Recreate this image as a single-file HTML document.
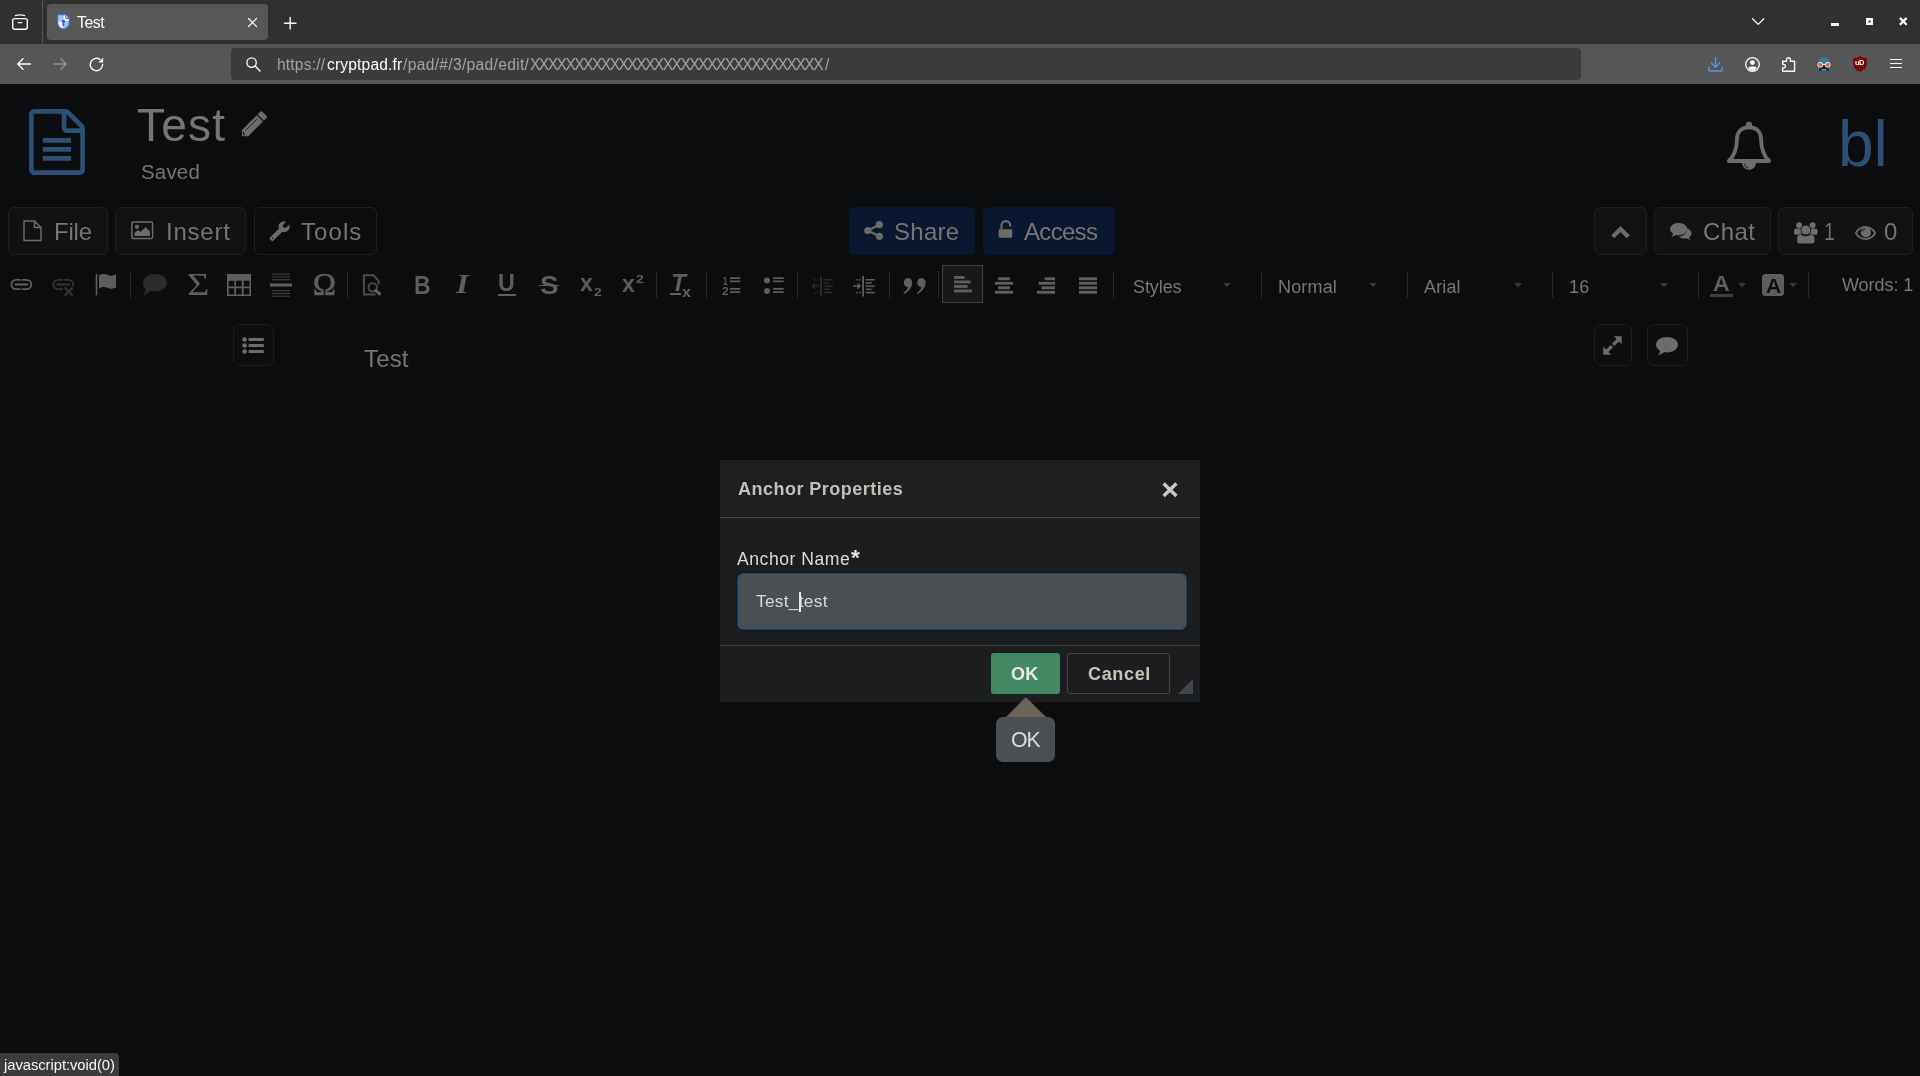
<!DOCTYPE html>
<html lang="en"><head><meta charset="utf-8"><title>Test</title>
<style>
*{margin:0;padding:0;box-sizing:border-box}
html,body{width:1920px;height:1076px;overflow:hidden;background:#0c0d0f}
body{position:relative;font-family:"Liberation Sans",sans-serif;}
.a{position:absolute;display:block}
.t{position:absolute;white-space:nowrap;line-height:1;display:block;will-change:transform}
svg{position:absolute;display:block;overflow:visible}
.btn{position:absolute;background:#111214;border:1px solid #1f2022;border-radius:6px}
.sep{position:absolute;width:1px;top:271px;height:27px;background:#2b2b2b}
.ck{fill:#5e5e5e}
.g{color:#7b7773}
</style></head>
<body>
<!-- browser chrome -->
<div class="a" style="left:0px;top:0px;width:1920px;height:44px;background:#303030"></div>
<div class="a" style="left:42px;top:0px;width:1px;height:44px;background:#555"></div>
<div class="a" style="left:47px;top:4px;width:221px;height:36px;background:#575757;border-radius:4px"></div>
<div class="a" style="left:0px;top:44px;width:1920px;height:40px;background:#565656"></div>
<div class="a" style="left:231px;top:48px;width:1350px;height:32px;background:#3c3c3c;border-radius:4px"></div>
<svg style="left:12px;top:14px;" width="16" height="16" viewBox="0 0 16 16"><path d="M3.300 1.600Q8 0.300 12.700 1.600" fill="none" stroke="#fbfbfe" stroke-width="1.200" stroke-linecap="round"/><rect x="0.7" y="4.6" width="14.6" height="10.7" rx="2" fill="none" stroke="#fbfbfe" stroke-width="1.4"/><path d="M6.2 8.6h3.6" stroke="#fbfbfe" stroke-width="1.4" stroke-linecap="round"/></svg>
<svg style="left:56.5px;top:14.1px;" width="13" height="16" viewBox="0 0 13 16"><path d="M0.600 0.600H6.400V7.300H0.600Z" fill="#a8c2ee"/><path d="M6.400 7.300H12.300V9C12.300 12.500 9.500 14.300 6.400 15.300Z" fill="#a8c2ee"/><path d="M6.400 0.600H9L12.300 4.300V7.300H6.400Z" fill="#f6f8fd"/><path d="M0.600 7.300H6.400V15.300C3.300 14.300 0.600 12.500 0.600 9Z" fill="#f6f8fd"/><path d="M0.600 0.600H9L12.300 4.300V9C12.300 12.500 9.500 14.300 6.400 15.300C3.300 14.300 0.600 12.500 0.600 9Z" fill="none" stroke="#3b6fd6" stroke-width="1.200" stroke-linejoin="round"/><path d="M8.800 0.800V4.500H12.100" fill="none" stroke="#3b6fd6" stroke-width="1"/><circle cx="6.400" cy="7.300" r="1.600" fill="#255bcf"/><path d="M5.700 8H7.100L7.400 11.700H5.400Z" fill="#255bcf"/></svg>
<span class="t" style="left:76.65px;top:14.83px;font-size:15.8px;color:#fbfbfe;letter-spacing:-0.406px;font-family:'Liberation Sans',sans-serif;">Test</span>
<svg style="left:247.5px;top:17.5px;" width="9" height="9" viewBox="0 0 9 9"><path d="M0.5 0.5L8.5 8.5M8.5 0.5L0.5 8.5" stroke="#fbfbfe" stroke-width="1.2" stroke-linecap="round"/></svg>
<svg style="left:283.5px;top:16.5px;" width="12.4" height="12.4" viewBox="0 0 12.4 12.4"><path d="M6.2 0.4V12M0.4 6.2H12" stroke="#fbfbfe" stroke-width="1.4" stroke-linecap="round"/></svg>
<svg style="left:1752px;top:18px;" width="12.4" height="7.5" viewBox="0 0 12.4 7.5"><path d="M0.6 0.8L6.2 6.4L11.8 0.8" fill="none" stroke="#fbfbfe" stroke-width="1.3" stroke-linecap="round" stroke-linejoin="round"/></svg>
<div class="a" style="left:1831px;top:23px;width:8px;height:3px;background:#fbfbfe"></div>
<svg style="left:1865.5px;top:18px;" width="7" height="7" viewBox="0 0 7 7"><path d="M0 0H7V7H0Z M2.6 2.6V4.6H4.6V2.6Z" fill="#fbfbfe" fill-rule="evenodd"/></svg>
<svg style="left:1898.5px;top:17.3px;" width="8.6" height="8.7" viewBox="0 0 8.6 8.7"><path d="M0.9 0.9L7.7 7.8M7.7 0.9L0.9 7.8" stroke="#fbfbfe" stroke-width="2.3" stroke-linecap="butt"/></svg>
<svg style="left:17px;top:58px;" width="14" height="12" viewBox="0 0 14 12"><path d="M6 0.7L0.8 6L6 11.3M1 6H13.5" fill="none" stroke="#fbfbfe" stroke-width="1.4" stroke-linecap="round" stroke-linejoin="round"/></svg>
<svg style="left:53px;top:58px;" width="14" height="12" viewBox="0 0 14 12"><path d="M8 0.7L13.2 6L8 11.3M13 6H0.5" fill="none" stroke="#909090" stroke-width="1.4" stroke-linecap="round" stroke-linejoin="round"/></svg>
<svg style="left:88.5px;top:56.5px;" width="15" height="15" viewBox="0 0 15 15"><path d="M13.6 7.5A6.2 6.2 0 1 1 10.9 2.4" fill="none" stroke="#fbfbfe" stroke-width="1.4" stroke-linecap="round"/><path d="M14.2 0.6V5.4H9.4Z" fill="#fbfbfe"/></svg>
<svg style="left:245.5px;top:56.5px;" width="15" height="15" viewBox="0 0 15 15"><circle cx="5.6" cy="5.6" r="4.7" fill="none" stroke="#fbfbfe" stroke-width="1.3"/><path d="M9.1 9.1L14 14" stroke="#fbfbfe" stroke-width="1.4" stroke-linecap="round"/></svg>
<span class="t" style="left:276.52px;top:56.59px;font-size:15.6px;color:#a2a2a5;letter-spacing:0.178px;font-family:'Liberation Sans',sans-serif;">https://</span>
<span class="t" style="left:326.94px;top:56.59px;font-size:15.6px;color:#fbfbfe;letter-spacing:0.161px;font-family:'Liberation Sans',sans-serif;">cryptpad.fr</span>
<span class="t" style="left:403.00px;top:56.59px;font-size:15.6px;color:#a2a2a5;letter-spacing:0.319px;font-family:'Liberation Sans',sans-serif;">/pad/#/3/pad/edit/</span>
<span class="t" style="left:530.16px;top:56.59px;font-size:15.6px;color:#a2a2a5;letter-spacing:-1.553px;font-family:'Liberation Sans',sans-serif;">XXXXXXXXXXXXXXXXXXXXXXXXXXXXXXXXX</span>
<span class="t" style="left:824.50px;top:56.59px;font-size:15.6px;color:#a2a2a5;letter-spacing:0.000px;font-family:'Liberation Sans',sans-serif;">/</span>
<svg style="left:1708px;top:56.5px;" width="15" height="15" viewBox="0 0 15 15"><path d="M7.5 0.7V10M3.3 6L7.5 10.2L11.7 6" fill="none" stroke="#4d96ec" stroke-width="1.4" stroke-linecap="round" stroke-linejoin="round"/><path d="M0.7 10.5V12.2A1.8 1.8 0 0 0 2.5 14H12.5A1.8 1.8 0 0 0 14.3 12.2V10.5" fill="none" stroke="#4d96ec" stroke-width="1.4" stroke-linecap="round"/></svg>
<svg style="left:1745px;top:57px;" width="15" height="15" viewBox="0 0 15 15"><circle cx="7.5" cy="7.5" r="6.8" fill="none" stroke="#fbfbfe" stroke-width="1.3"/><circle cx="7.5" cy="5.6" r="2.4" fill="#fbfbfe"/><path d="M3.200 10.600C4.500 9.200 10.500 9.200 11.800 10.600C11 12.700 9.300 13.700 7.500 13.700S4 12.700 3.200 10.600Z" fill="#fbfbfe"/></svg>
<svg style="left:1781.5px;top:56px;" width="14" height="16" viewBox="0 0 14 16"><path d="M0.7 5.2H4.6V3.6A1.9 1.9 0 0 1 8.4 3.6V5.2H12.6V15.3H0.7V11.9H1.8A1.7 1.7 0 0 0 1.8 8.5H0.7Z" fill="none" stroke="#fbfbfe" stroke-width="1.4" stroke-linejoin="round"/></svg>
<svg style="left:1816px;top:57px;" width="16" height="14" viewBox="0 0 16 14"><path d="M2 9C1 3.5 4.5 0.2 8 0.2S15 3.5 14 9V14H2Z" fill="#2e7f98"/><path d="M3 8H13V14H3Z" fill="#1d2a33"/><path d="M5.5 12H10.500V13.6H5.500Z" fill="#4fa1b8"/><circle cx="4.300" cy="7.8" r="2.500" fill="#e8613a" stroke="#f1e6e0" stroke-width="1"/><circle cx="11.700" cy="7.8" r="2.500" fill="#e8613a" stroke="#f1e6e0" stroke-width="1"/><path d="M6.800 7.500H9.200" stroke="#f1e6e0" stroke-width="1"/></svg>
<svg style="left:1853px;top:56px;" width="14" height="16" viewBox="0 0 14 16"><path d="M7 0.2C5 1.600 2.500 2 0.3 2V7.500C0.300 11.800 3.500 14.500 7 15.800C10.500 14.500 13.700 11.800 13.700 7.500V2C11.500 2 9 1.600 7 0.200Z" fill="#800000"/></svg>
<span class="t" style="left:1855.2px;top:59px;font-size:7.5px;font-weight:bold;color:#fff;letter-spacing:-0.6px">uD</span>
<div class="a" style="left:1890px;top:58.7px;width:12px;height:1.3px;background:#fbfbfe;border-radius:1px"></div>
<div class="a" style="left:1890px;top:63.1px;width:12px;height:1.3px;background:#fbfbfe;border-radius:1px"></div>
<div class="a" style="left:1890px;top:67.1px;width:12px;height:1.3px;background:#fbfbfe;border-radius:1px"></div>
<div class="a" style="left:0px;top:1052.5px;width:119px;height:24px;background:#3b3b3b;border-top-right-radius:4px"></div>
<span class="t" style="left:4.27px;top:1057.77px;font-size:14.8px;color:#f4f4f6;letter-spacing:-0.054px;font-family:'Liberation Sans',sans-serif;">javascript:void(0)</span>
<!-- cryptpad toolbar -->
<svg style="left:29px;top:109px;" width="56" height="66" viewBox="0 0 56 66"><path d="M2.400 5.400A3 3 0 0 1 5.400 2.400H36.600Q38 2.400 39 3.400L52.600 17Q53.600 18 53.600 19.400V60.600A3 3 0 0 1 50.600 63.600H5.400A3 3 0 0 1 2.400 60.600Z" fill="none" stroke="#2c5075" stroke-width="4.700" stroke-linejoin="round"/><path d="M35.100 3V18.600A3 3 0 0 0 38.100 21.600H53" fill="none" stroke="#2c5075" stroke-width="4.700"/><path d="M13.800 31.400H42.100M13.800 40.400H42.100M13.800 49.400H42.100" stroke="#2c5075" stroke-width="4.600"/></svg>
<span class="t" style="left:136.59px;top:102.06px;font-size:46px;color:#787471;letter-spacing:1.190px;font-family:'Liberation Sans',sans-serif;">Test</span>
<svg style="left:0px;top:0px;" width="1" height="1" viewBox="0 0 1 1"><g transform="translate(242 136.300) rotate(45) translate(0 -31.750)"><path d="M-4.450 5.200V1.600A1.600 1.600 0 0 1 -2.850 0H2.850A1.600 1.600 0 0 1 4.450 1.600V5.200Z" fill="#6e6c69"/><path d="M-4.450 6.500H4.450V27.300L0 31.750L-4.450 27.300Z" fill="#6e6c69"/><path d="M-1.700 8.500V25.500" stroke="#0c0d0f" stroke-width="0.700"/><path d="M-2.300 27.700L0 29.300L1.200 28.300" fill="none" stroke="#0c0d0f" stroke-width="0.900"/></g></svg>
<span class="t" style="left:140.78px;top:161.55px;font-size:20.5px;color:#787471;letter-spacing:0.179px;font-family:'Liberation Sans',sans-serif;">Saved</span>
<div class="btn" style="left:8px;top:207px;width:100px;height:48px;"></div>
<div class="btn" style="left:115px;top:207px;width:131px;height:48px;"></div>
<div class="btn" style="left:254px;top:207px;width:123px;height:48px;background:#0c0d0f"></div>
<svg style="left:23px;top:220px;" width="19" height="21.5" viewBox="0 0 19 21.5"><path d="M1 1H11.500L18 7.500V20.500H1Z" fill="none" stroke="#6e6c69" stroke-width="1.500" stroke-linejoin="round"/><path d="M11.500 1V7.500H18" fill="none" stroke="#6e6c69" stroke-width="1.500" stroke-linejoin="round"/></svg>
<span class="t" style="left:54.03px;top:219.68px;font-size:24px;color:#787471;letter-spacing:-0.213px;font-family:'Liberation Sans',sans-serif;">File</span>
<svg style="left:131px;top:221px;" width="22.5" height="18.5" viewBox="0 0 22.5 18.5"><rect x="0.900" y="0.900" width="20.700" height="16.700" rx="1.500" fill="none" stroke="#6e6c69" stroke-width="1.500"/><circle cx="6" cy="5.800" r="2.100" fill="#6e6c69"/><path d="M3.500 15V12L7 8.800L9.500 11L14.500 6L19 10.500V15Z" fill="#6e6c69"/></svg>
<span class="t" style="left:165.79px;top:219.68px;font-size:24px;color:#787471;letter-spacing:0.770px;font-family:'Liberation Sans',sans-serif;">Insert</span>
<svg style="left:0px;top:0px;" width="1" height="1" viewBox="0 0 1 1"><g transform="translate(284.100 226.700) rotate(45)"><circle cx="0" cy="0" r="5.500" fill="#6e6c69"/><path d="M-2.300 2H2.300V17.700A1.200 1.200 0 0 1 1.100 18.900H-1.100A1.200 1.200 0 0 1 -2.300 17.700Z" fill="#6e6c69"/><path d="M-2.100 -7V-1.300A2.100 2.100 0 0 0 2.100 -1.300V-7Z" fill="#0c0d0f"/><circle cx="0" cy="16.400" r="0.700" fill="#0c0d0f"/></g></svg>
<span class="t" style="left:300.77px;top:219.68px;font-size:24px;color:#787471;letter-spacing:1.069px;font-family:'Liberation Sans',sans-serif;">Tools</span>
<div class="a" style="left:849px;top:207px;width:126px;height:48px;background:#0a1731;border-radius:6px"></div>
<div class="a" style="left:983px;top:207px;width:132px;height:48px;background:#0a1731;border-radius:6px"></div>
<svg style="left:864px;top:221px;" width="19" height="19" viewBox="0 0 19 19"><circle cx="15.300" cy="3.700" r="3.600" fill="#6e6c69"/><circle cx="3.800" cy="9.500" r="3.600" fill="#6e6c69"/><circle cx="15.300" cy="15.300" r="3.600" fill="#6e6c69"/><path d="M15.300 3.700L3.800 9.500L15.300 15.300" fill="none" stroke="#6e6c69" stroke-width="2.200"/></svg>
<span class="t" style="left:894.42px;top:219.68px;font-size:24px;color:#787471;letter-spacing:0.276px;font-family:'Liberation Sans',sans-serif;">Share</span>
<svg style="left:999px;top:220px;" width="13.5" height="18" viewBox="0 0 13.5 18"><rect x="-0.400" y="9.300" width="13.600" height="8.500" rx="1.200" fill="#6e6c69"/><path d="M2.500 9.600V5.500A4.350 4.350 0 0 1 11.200 5.500V6.400" fill="none" stroke="#6e6c69" stroke-width="2.200"/></svg>
<span class="t" style="left:1024.45px;top:219.68px;font-size:24px;color:#787471;letter-spacing:-0.688px;font-family:'Liberation Sans',sans-serif;">Access</span>
<div class="btn" style="left:1594px;top:207px;width:53px;height:48px;"></div>
<div class="btn" style="left:1654px;top:207px;width:117px;height:48px;"></div>
<div class="btn" style="left:1778px;top:207px;width:135px;height:48px;"></div>
<svg style="left:1611px;top:225.5px;" width="19" height="12.5" viewBox="0 0 19 12.5"><path d="M1.800 10.800L9.500 3L17.200 10.800" fill="none" stroke="#6e6c69" stroke-width="4.300"/></svg>
<svg style="left:1670px;top:222.5px;" width="21.5" height="17" viewBox="0 0 21.5 17"><path d="M8.600 0C13.400 0 17.200 2.700 17.200 6.100S13.400 12.200 8.600 12.200C7.700 12.200 6.800 12.100 6 11.900C4.800 12.800 3.200 13.400 1.400 13.500C2.300 12.800 3 11.800 3.200 10.700C1.200 9.600 0 7.900 0 6.100C0 2.700 3.800 0 8.600 0Z" stroke="#111214" stroke-width="1.200" paint-order="stroke" fill="#6e6c69"/><path d="M17 5.200C19.700 6.100 21.500 8 21.500 10.200C21.500 11.800 20.500 13.200 19 14.200C19.200 15.100 19.700 16 20.400 16.700C18.900 16.600 17.600 16 16.600 15.200C15.900 15.400 15.200 15.500 14.500 15.500C12.300 15.500 10.300 14.700 9 13.400C13.500 13.100 17.100 9.900 17.100 6C17.100 5.700 17.100 5.500 17 5.200Z" fill="#6e6c69"/></svg>
<span class="t" style="left:1703.30px;top:219.68px;font-size:24px;color:#787471;letter-spacing:0.393px;font-family:'Liberation Sans',sans-serif;">Chat</span>
<svg style="left:1794px;top:221.5px;" width="23" height="21.5" viewBox="0 0 23 21.5"><circle cx="5.100" cy="3.300" r="3" fill="#6e6c69"/><circle cx="18.600" cy="3.300" r="3" fill="#6e6c69"/><rect x="0" y="6.600" width="8" height="6.200" rx="2.600" fill="#6e6c69"/><rect x="15.700" y="6.600" width="8" height="6.200" rx="2.600" fill="#6e6c69"/><circle cx="11.850" cy="8" r="4.600" fill="#6e6c69" stroke="#111214" stroke-width="1.300" paint-order="stroke"/><path d="M3.200 19.200V16.500C3.200 13.800 4.800 12.600 6.600 12.200C8 13.500 9.800 14.200 11.850 14.200S15.700 13.500 17.100 12.200C18.900 12.600 20.500 13.800 20.500 16.500V19.200A2.200 2.200 0 0 1 18.300 21.400H5.400A2.200 2.200 0 0 1 3.200 19.200Z" fill="#6e6c69" stroke="#111214" stroke-width="1" paint-order="stroke"/></svg>
<span class="t" style="left:1823.72px;top:219.71px;font-size:24.56px;color:#787471;font-family:'Liberation Sans',sans-serif;transform-origin:0 0;transform:scaleX(0.792);">1</span>
<svg style="left:1855px;top:226px;" width="21" height="14" viewBox="0 0 21 14"><path d="M0.800 7C3 3.200 6.500 0.900 10.500 0.900S18 3.200 20.200 7C18 10.800 14.500 13.100 10.500 13.100S3 10.800 0.800 7Z" fill="none" stroke="#6e6c69" stroke-width="1.700"/><circle cx="10.900" cy="6.400" r="5.100" fill="#6e6c69"/><path d="M10.300 2.800A3 3 0 0 0 7.300 5.800" fill="none" stroke="#111214" stroke-width="0.900"/></svg>
<span class="t" style="left:1883.56px;top:219.68px;font-size:24px;color:#787471;letter-spacing:0.000px;font-family:'Liberation Sans',sans-serif;">0</span>
<svg style="left:1727px;top:122px;" width="44" height="48" viewBox="0 0 44 48"><path d="M1.900 39C6 35 9.900 27 9.900 17.500C9.900 10 14.500 5.250 22 5.250C29.500 5.250 34.100 10 34.100 17.500C34.100 27 38 35 42.100 39Z" fill="none" stroke="#6e6c69" stroke-width="3.900" stroke-linejoin="round"/><circle cx="22" cy="2.800" r="3.100" fill="#6e6c69"/><path d="M15 40.800A7.100 7.100 0 0 0 29.200 40.800Z" fill="#6e6c69"/><path d="M17.300 41.500A5.200 5.200 0 0 0 21.800 46.200" fill="none" stroke="#0c0d0f" stroke-width="0.800"/></svg>
<span class="t" style="left:1838.40px;top:111.82px;font-size:64px;color:#2c5075;letter-spacing:0.028px;font-family:'Liberation Sans',sans-serif;">bl</span>
<div class="btn" style="left:233px;top:324px;width:41px;height:42px;border-radius:7px;background:#0d0e10;border-color:#1d1e20"></div>
<div class="btn" style="left:1594px;top:324px;width:38px;height:42px;border-radius:7px;background:#0d0e10;border-color:#1d1e20"></div>
<div class="btn" style="left:1647px;top:324px;width:41px;height:42px;border-radius:7px;background:#0d0e10;border-color:#1d1e20"></div>
<svg style="left:0px;top:0px;pointer-events:none" width="1920" height="1076" viewBox="0 0 1920 1076"><circle cx="244.600" cy="339.5" r="2.300" fill="#6e6c69"/><rect x="248.600" y="338.0" width="15.200" height="3" fill="#6e6c69"/><circle cx="244.600" cy="345.5" r="2.300" fill="#6e6c69"/><rect x="248.600" y="344.0" width="15.200" height="3" fill="#6e6c69"/><circle cx="244.600" cy="351.5" r="2.300" fill="#6e6c69"/><rect x="248.600" y="350.0" width="15.200" height="3" fill="#6e6c69"/></svg>
<svg style="left:1603px;top:336px;" width="19" height="19" viewBox="0 0 19 19"><path d="M10.800 0.300H18.700V8.200L15.900 5.400L11.300 10L9 7.700L13.600 3.100Z" fill="#6e6c69"/><path d="M8.200 18.700H0.300V10.800L3.100 13.600L7.700 9L10 11.300L5.400 15.900Z" fill="#6e6c69"/></svg>
<svg style="left:1656px;top:337px;" width="22" height="18.5" viewBox="0 0 22 18.5"><path d="M11 0C17.100 0 22 3.400 22 7.700S17.100 15.400 11 15.400C10 15.400 9 15.300 8.100 15.100C6.500 16.800 4.300 17.900 1.600 18.300C3 17 3.900 15.400 4.100 13.700C1.600 12.300 0 10.100 0 7.700C0 3.400 4.900 0 11 0Z" fill="#6e6c69"/></svg>
<span class="t" style="left:363.97px;top:346.68px;font-size:24px;color:#787471;letter-spacing:0.160px;font-family:'Liberation Sans',sans-serif;">Test</span>
<!-- ckeditor toolbar -->
<div class="a" style="left:130px;top:271px;width:1.3px;height:27px;background:#2a2a2b"></div>
<div class="a" style="left:347px;top:271px;width:1.3px;height:27px;background:#2a2a2b"></div>
<div class="a" style="left:656px;top:271px;width:1.3px;height:27px;background:#2a2a2b"></div>
<div class="a" style="left:706px;top:271px;width:1.3px;height:27px;background:#2a2a2b"></div>
<div class="a" style="left:797px;top:271px;width:1.3px;height:27px;background:#2a2a2b"></div>
<div class="a" style="left:889px;top:271px;width:1.3px;height:27px;background:#2a2a2b"></div>
<div class="a" style="left:938px;top:271px;width:1.3px;height:27px;background:#2a2a2b"></div>
<div class="a" style="left:1113px;top:271px;width:1.3px;height:27px;background:#2a2a2b"></div>
<div class="a" style="left:1261px;top:271px;width:1.3px;height:27px;background:#2a2a2b"></div>
<div class="a" style="left:1407px;top:271px;width:1.3px;height:27px;background:#2a2a2b"></div>
<div class="a" style="left:1552px;top:271px;width:1.3px;height:27px;background:#2a2a2b"></div>
<div class="a" style="left:1698px;top:271px;width:1.3px;height:27px;background:#2a2a2b"></div>
<div class="a" style="left:1808px;top:271px;width:1.3px;height:27px;background:#2a2a2b"></div>
<svg style="left:0px;top:0px;pointer-events:none" width="1920" height="1076" viewBox="0 0 1920 1076"><rect x="11.4" y="279.8" width="19.800" height="9.400" rx="4.700" fill="none" stroke="#5e5e5e" stroke-width="1.800"/><rect x="20.8" y="278.7" width="1" height="2.200" fill="#0c0d0f"/><rect x="20.8" y="288.1" width="1" height="2.200" fill="#0c0d0f"/><rect x="14.8" y="283.5" width="13.200" height="2" fill="#5e5e5e"/></svg>
<svg style="left:0px;top:0px;pointer-events:none" width="1920" height="1076" viewBox="0 0 1920 1076"><rect x="53.4" y="279.8" width="19.800" height="9.400" rx="4.700" fill="none" stroke="#353535" stroke-width="1.800"/><rect x="62.8" y="278.7" width="1" height="2.200" fill="#0c0d0f"/><rect x="62.8" y="288.1" width="1" height="2.200" fill="#0c0d0f"/><rect x="56.8" y="283.5" width="13.200" height="2" fill="#353535"/><rect x="63" y="286" width="12" height="11" fill="#0c0d0f"/><path d="M64.700 287.500L72.700 295.700M72.700 287.500L64.700 295.700" stroke="#353535" stroke-width="2.200"/></svg>
<svg style="left:0px;top:0px;pointer-events:none" width="1920" height="1076" viewBox="0 0 1920 1076"><rect x="95.700" y="274" width="1.600" height="21.500" fill="#5e5e5e"/><path d="M99 275.300C102 273.400 105 273.600 107.500 274.800S113 276.300 116 274.300V287.300C113 289.300 110 289 107.500 287.800S102 286.400 99 288.300Z" fill="#5e5e5e"/></svg>
<svg style="left:0px;top:0px;pointer-events:none" width="1920" height="1076" viewBox="0 0 1920 1076"><path d="M155 274C161.600 274 167 277.800 167 282.700S161.600 291.400 155 291.400C153.300 291.400 151.700 291.200 150.300 290.700C148.800 292.600 146.500 294.300 143.300 295.300C144.800 293.300 145.600 291.300 145.600 289.300C143.900 287.700 143 285.300 143 282.700C143 277.800 148.400 274 155 274Z" fill="#2b2b2b"/></svg>
<span class="t" style="left:186.50px;top:268.15px;font-size:32.06px;color:#5e5e5e;font-family:'Liberation Serif',serif;transform-origin:0 0;transform:scaleX(1.202);">&Sigma;</span>
<span class="t" style="left:312.76px;top:269.89px;font-size:30.82px;color:#5e5e5e;font-family:'Liberation Serif',serif;transform-origin:0 0;transform:scaleX(0.982);-webkit-text-stroke:0.700px #5e5e5e;">&Omega;</span>
<svg style="left:0px;top:0px;pointer-events:none" width="1920" height="1076" viewBox="0 0 1920 1076"><path d="M227 274H251V296H227Z M228.700 280.800V286.600H234.300V280.800Z M236 280.800V286.600H241.800V280.800Z M243.700 280.800V286.600H249.400V280.800Z M228.700 288.300V294.400H234.300V288.300Z M236 288.300V294.400H241.800V288.300Z M243.700 288.300V294.400H249.400V288.300Z" fill="#5e5e5e" fill-rule="evenodd"/></svg>
<svg style="left:0px;top:0px;pointer-events:none" width="1920" height="1076" viewBox="0 0 1920 1076"><rect x="272" y="273.5" width="18" height="1.200" fill="#3c3c3c"/><rect x="272" y="276.3" width="18" height="1.200" fill="#3c3c3c"/><rect x="272" y="279.1" width="18" height="1.200" fill="#3c3c3c"/><rect x="272" y="290" width="18" height="1.200" fill="#3c3c3c"/><rect x="272" y="292.8" width="18" height="1.200" fill="#3c3c3c"/><rect x="272" y="295.6" width="18" height="1.200" fill="#3c3c3c"/><rect x="270" y="283.500" width="22" height="3" fill="#5e5e5e"/></svg>
<svg style="left:0px;top:0px;pointer-events:none" width="1920" height="1076" viewBox="0 0 1920 1076"><path d="M363.900 294.500V275.200H373.300L378.600 280.900V284.500" fill="none" stroke="#4c4c4c" stroke-width="2" stroke-linejoin="round"/><path d="M362.900 294.500H375.500" fill="none" stroke="#4c4c4c" stroke-width="2"/><circle cx="372.700" cy="287.300" r="4.200" fill="#0c0d0f" stroke="#4c4c4c" stroke-width="1.900"/><path d="M376 290.600L379.500 293.900" stroke="#5e5e5e" stroke-width="3.200" stroke-linecap="round"/></svg>
<span class="t" style="left:414.49px;top:271.85px;font-size:26.16px;color:#5e5e5e;font-family:'Liberation Sans',sans-serif;transform-origin:0 0;transform:scaleX(0.876);font-weight:bold;">B</span>
<span class="t" style="left:456.33px;top:270.98px;font-size:27.48px;color:#5e5e5e;font-family:'Liberation Serif',serif;transform-origin:0 0;transform:scaleX(1.190);font-weight:bold;font-style:italic;">I</span>
<span class="t" style="left:498.30px;top:272.30px;font-size:23.35px;color:#5e5e5e;font-family:'Liberation Sans',sans-serif;transform-origin:0 0;transform:scaleX(0.996);font-weight:bold;">U</span>
<div class="a" style="left:498px;top:294.3px;width:17.5px;height:1.7px;background:#5e5e5e"></div>
<span class="t" style="left:539.93px;top:271.94px;font-size:25.99px;color:#5e5e5e;font-family:'Liberation Sans',sans-serif;transform-origin:0 0;transform:scaleX(1.065);font-weight:bold;">S</span>
<div class="a" style="left:539px;top:284.5px;width:20px;height:1.7px;background:#5e5e5e"></div>
<span class="t" style="left:579.86px;top:271.16px;font-size:24.62px;color:#5e5e5e;font-family:'Liberation Sans',sans-serif;transform-origin:0 0;transform:scaleX(0.935);font-weight:bold;">x</span>
<span class="t" style="left:593.83px;top:286.60px;font-size:11.46px;color:#5e5e5e;font-family:'Liberation Sans',sans-serif;transform-origin:0 0;transform:scaleX(1.210);font-weight:bold;">2</span>
<span class="t" style="left:621.86px;top:272.16px;font-size:24.62px;color:#5e5e5e;font-family:'Liberation Sans',sans-serif;transform-origin:0 0;transform:scaleX(0.935);font-weight:bold;">x</span>
<span class="t" style="left:635.83px;top:274.30px;font-size:11.46px;color:#5e5e5e;font-family:'Liberation Sans',sans-serif;transform-origin:0 0;transform:scaleX(1.210);font-weight:bold;">2</span>
<span class="t" style="left:671.28px;top:272.31px;font-size:23.26px;color:#5e5e5e;font-family:'Liberation Sans',sans-serif;transform-origin:0 0;transform:scaleX(1.054);font-weight:bold;font-style:italic;">T</span>
<div class="a" style="left:670px;top:293.3px;width:11px;height:1.6px;background:#5e5e5e"></div>
<span class="t" style="left:682.40px;top:284.17px;font-size:15.15px;color:#5e5e5e;font-family:'Liberation Sans',sans-serif;transform-origin:0 0;transform:scaleX(1.070);font-weight:bold;">x</span>
<span class="t" style="left:723.34px;top:275.16px;font-size:11.63px;color:#5e5e5e;font-family:'Liberation Sans',sans-serif;transform-origin:0 0;transform:scaleX(0.645);font-weight:bold;">1</span>
<span class="t" style="left:721.90px;top:286.30px;font-size:11.46px;color:#5e5e5e;font-family:'Liberation Sans',sans-serif;transform-origin:0 0;transform:scaleX(1.030);font-weight:bold;">2</span>
<svg style="left:0px;top:0px;pointer-events:none" width="1920" height="1076" viewBox="0 0 1920 1076"><rect x="730" y="277.3" width="10.300" height="1.700" fill="#5e5e5e"/><rect x="730" y="280.5" width="10.300" height="1.700" fill="#5e5e5e"/><rect x="730" y="288" width="10.300" height="1.700" fill="#5e5e5e"/><rect x="730" y="291.2" width="10.300" height="1.700" fill="#5e5e5e"/></svg>
<svg style="left:0px;top:0px;pointer-events:none" width="1920" height="1076" viewBox="0 0 1920 1076"><circle cx="767" cy="280.500" r="3" fill="#5e5e5e"/><circle cx="767" cy="291" r="3" fill="#5e5e5e"/><rect x="773" y="277.3" width="10.700" height="1.700" fill="#5e5e5e"/><rect x="773" y="280.5" width="10.700" height="1.700" fill="#5e5e5e"/><rect x="773" y="288" width="10.700" height="1.700" fill="#5e5e5e"/><rect x="773" y="291.2" width="10.700" height="1.700" fill="#5e5e5e"/></svg>
<svg style="left:0px;top:0px;pointer-events:none" width="1920" height="1076" viewBox="0 0 1920 1076"><rect x="820.2" y="276" width="1.800" height="20.500" fill="#2c2c2c"/><rect x="823.7" y="279" width="9" height="1.500" fill="#2c2c2c"/><rect x="823.7" y="282.2" width="6" height="1.500" fill="#2c2c2c"/><rect x="823.7" y="285.4" width="9" height="1.500" fill="#2c2c2c"/><rect x="823.7" y="288.6" width="6" height="1.500" fill="#2c2c2c"/><rect x="823.7" y="291.8" width="9" height="1.500" fill="#2c2c2c"/><rect x="814.2" y="279" width="1.500" height="1.500" fill="#2c2c2c"/><rect x="817" y="279" width="1.500" height="1.500" fill="#2c2c2c"/><rect x="814.2" y="291.8" width="1.500" height="1.500" fill="#2c2c2c"/><rect x="817" y="291.8" width="1.500" height="1.500" fill="#2c2c2c"/><path d="M819 285.400H813" stroke="#2c2c2c" stroke-width="1.500"/><path d="M814.8 282.700L811.3 286.100L814.8 289.500Z" fill="#2c2c2c"/><rect x="862.2" y="276" width="1.800" height="20.500" fill="#5e5e5e"/><rect x="865.7" y="279" width="9" height="1.500" fill="#5e5e5e"/><rect x="865.7" y="282.2" width="6" height="1.500" fill="#5e5e5e"/><rect x="865.7" y="285.4" width="9" height="1.500" fill="#5e5e5e"/><rect x="865.7" y="288.6" width="6" height="1.500" fill="#5e5e5e"/><rect x="865.7" y="291.8" width="9" height="1.500" fill="#5e5e5e"/><rect x="856.2" y="279" width="1.500" height="1.500" fill="#5e5e5e"/><rect x="859" y="279" width="1.500" height="1.500" fill="#5e5e5e"/><rect x="856.2" y="291.8" width="1.500" height="1.500" fill="#5e5e5e"/><rect x="859" y="291.8" width="1.500" height="1.500" fill="#5e5e5e"/><path d="M853 286.100H859" stroke="#5e5e5e" stroke-width="1.500"/><path d="M857.5 282.700L861 286.100L857.5 289.500Z" fill="#5e5e5e"/></svg>
<svg style="left:0px;top:0px;pointer-events:none" width="1920" height="1076" viewBox="0 0 1920 1076"><path d="M907.6 278A4.600 4.600 0 0 1 912.2 282.600C912.2 287.500 909 291.500 904 294L903.3 293C906 291 907.6 289 907.9 287.100A4.600 4.600 0 0 1 907.6 278Z" fill="#5e5e5e"/><path d="M921.1 278A4.600 4.600 0 0 1 925.7 282.600C925.7 287.500 922.5 291.500 917.5 294L916.8 293C919.5 291 921.1 289 921.4 287.100A4.600 4.600 0 0 1 921.1 278Z" fill="#5e5e5e"/></svg>
<div class="a" style="left:942px;top:265px;width:41px;height:38px;background:#17181a;border:1px solid #4b4032"></div>
<svg style="left:0px;top:0px;pointer-events:none" width="1920" height="1076" viewBox="0 0 1920 1076"><rect x="954" y="276.0" width="10.5" height="2.900" fill="#5e5e5e"/><rect x="954" y="280.5" width="16.5" height="2.900" fill="#5e5e5e"/><rect x="954" y="285.0" width="13.5" height="2.900" fill="#5e5e5e"/><rect x="954" y="289.5" width="18" height="2.900" fill="#5e5e5e"/><rect x="998.0" y="277.3" width="12" height="2.900" fill="#5e5e5e"/><rect x="995.0" y="281.8" width="18" height="2.900" fill="#5e5e5e"/><rect x="998.0" y="286.3" width="12" height="2.900" fill="#5e5e5e"/><rect x="995.0" y="290.8" width="18" height="2.900" fill="#5e5e5e"/><rect x="1044.5" y="277.3" width="10.5" height="2.900" fill="#5e5e5e"/><rect x="1038.5" y="281.8" width="16.5" height="2.900" fill="#5e5e5e"/><rect x="1041.5" y="286.3" width="13.5" height="2.900" fill="#5e5e5e"/><rect x="1037" y="290.8" width="18" height="2.900" fill="#5e5e5e"/><rect x="1079" y="277.3" width="18" height="2.900" fill="#5e5e5e"/><rect x="1079" y="281.8" width="18" height="2.900" fill="#5e5e5e"/><rect x="1079" y="286.3" width="18" height="2.900" fill="#5e5e5e"/><rect x="1079" y="290.8" width="18" height="2.900" fill="#5e5e5e"/></svg>
<span class="t" style="left:1133.39px;top:278.06px;font-size:18px;color:#7a7672;letter-spacing:-0.091px;font-family:'Liberation Sans',sans-serif;">Styles</span>
<span class="t" style="left:1278.32px;top:278.06px;font-size:18px;color:#7a7672;letter-spacing:0.170px;font-family:'Liberation Sans',sans-serif;">Normal</span>
<span class="t" style="left:1423.96px;top:278.06px;font-size:18px;color:#7a7672;letter-spacing:0.131px;font-family:'Liberation Sans',sans-serif;">Arial</span>
<span class="t" style="left:1569.33px;top:278.06px;font-size:18px;color:#7a7672;letter-spacing:0.226px;font-family:'Liberation Sans',sans-serif;">16</span>
<svg style="left:0px;top:0px;pointer-events:none" width="1920" height="1076" viewBox="0 0 1920 1076"><path d="M1223 283H1231.2L1227.1 287.300Z" fill="#3f362d"/><path d="M1369 283H1377.2L1373.1 287.300Z" fill="#3f362d"/><path d="M1514 283H1522.2L1518.1 287.300Z" fill="#3f362d"/><path d="M1660 283H1668.2L1664.1 287.300Z" fill="#3f362d"/><path d="M1738 283H1746.2L1742.1 287.300Z" fill="#3f362d"/><path d="M1789 283H1797.2L1793.1 287.300Z" fill="#3f362d"/></svg>
<span class="t" style="left:1713.45px;top:272.54px;font-size:21.80px;color:#5e5e5e;font-family:'Liberation Sans',sans-serif;transform-origin:0 0;transform:scaleX(1.058);font-weight:bold;">A</span>
<div class="a" style="left:1710px;top:294px;width:23px;height:3px;background:#3f3f3f"></div>
<div class="a" style="left:1762px;top:274px;width:22px;height:22px;background:#5e5e5e;border-radius:3.500px"></div>
<span class="t" style="left:1765.50px;top:274.66px;font-size:21.08px;color:#0e0e0f;font-family:'Liberation Sans',sans-serif;transform-origin:0 0;transform:scaleX(0.989);font-weight:bold;">A</span>
<span class="t" style="left:1842.23px;top:275.76px;font-size:18px;color:#7a7672;letter-spacing:-0.051px;font-family:'Liberation Sans',sans-serif;">Words: 1</span>
<!-- anchor dialog -->
<div class="a" style="left:720px;top:460px;width:480px;height:242px;background:#1c1d1f"></div>
<div class="a" style="left:720px;top:460px;width:480px;height:57px;background:#1e1f21"></div>
<div class="a" style="left:720px;top:517px;width:480px;height:1px;background:#40464b"></div>
<div class="a" style="left:720px;top:645px;width:480px;height:1px;background:#3a3d40"></div>
<span class="t" style="left:738.07px;top:479.96px;font-size:18px;color:#c5beb4;letter-spacing:0.476px;font-family:'Liberation Sans',sans-serif;font-weight:bold;">Anchor Properties</span>
<svg style="left:1162px;top:482px;" width="16" height="15.5" viewBox="0 0 16 15.5"><path d="M1.600 1.500L14.400 14M14.400 1.500L1.600 14" stroke="#c9c8c5" stroke-width="3.400" stroke-linecap="butt"/></svg>
<span class="t" style="left:737.26px;top:550.50px;font-size:17.6px;color:#dcdcda;letter-spacing:0.520px;font-family:'Liberation Sans',sans-serif;">Anchor Name</span>
<span class="t" style="left:850.95px;top:548.09px;font-size:21.51px;color:#e4e4e2;font-family:'Liberation Sans',sans-serif;transform-origin:0 0;transform:scaleX(1.057);font-weight:bold;">*</span>
<div class="a" style="left:737px;top:573px;width:450px;height:57px;background:#4a4f53;border:1px solid #034b8b;border-radius:6px;box-shadow:0 0 0 1px #17140f"></div>
<span class="t" style="left:755.92px;top:593.33px;font-size:17.33px;color:#dad8d4;letter-spacing:0.268px;font-family:'Liberation Sans',sans-serif;">Test_test</span>
<div class="a" style="left:799.3px;top:591.5px;width:1.6px;height:20px;background:#ece8e0"></div>
<div class="a" style="left:991px;top:653px;width:69px;height:41px;background:#438862;border-radius:3px"></div>
<span class="t" style="left:1011.26px;top:664.76px;font-size:18px;color:#e9e9e7;letter-spacing:0.200px;font-family:'Liberation Sans',sans-serif;font-weight:bold;">OK</span>
<div class="a" style="left:1067px;top:653px;width:103px;height:41px;background:#1c1d1f;border:1px solid #43474a;border-radius:3px"></div>
<span class="t" style="left:1087.56px;top:664.76px;font-size:18px;color:#c9c2b8;letter-spacing:0.655px;font-family:'Liberation Sans',sans-serif;font-weight:bold;">Cancel</span>
<svg style="left:1178px;top:679px;" width="15" height="15" viewBox="0 0 15 15"><path d="M15 0V15H0Z" fill="#42474b"/></svg>
<svg style="left:1006px;top:697px;" width="40" height="20" viewBox="0 0 40 20"><path d="M0 20L19.800 0L40 20Z" fill="#6c6358"/></svg>
<div class="a" style="left:996px;top:717px;width:59px;height:45px;background:#4a4f54;border-radius:7px"></div>
<span class="t" style="left:1010.60px;top:729.94px;font-size:21.33px;color:#dddbd6;letter-spacing:-1.185px;font-family:'Liberation Sans',sans-serif;">OK</span>
</body></html>
